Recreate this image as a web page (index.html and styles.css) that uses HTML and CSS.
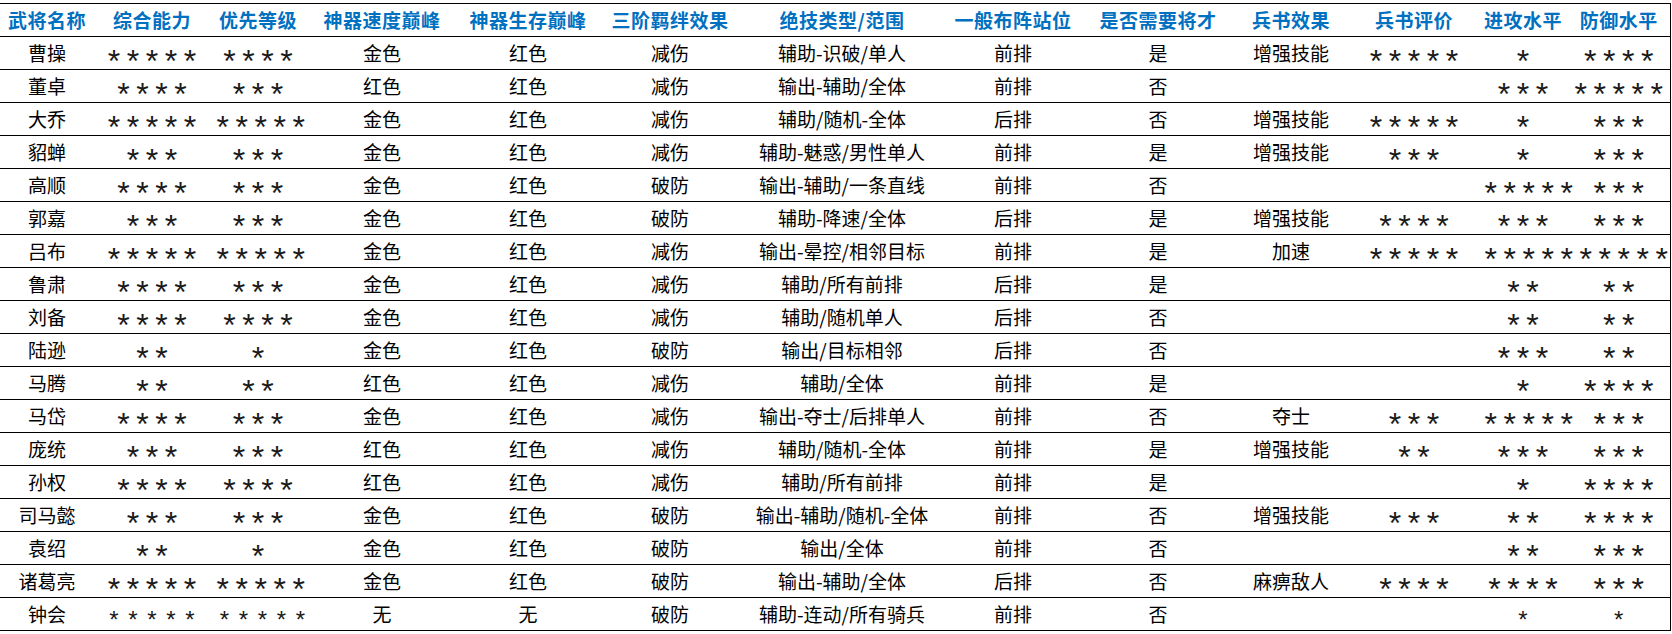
FILE: index.html
```html
<!DOCTYPE html>
<html lang="zh-CN">
<head>
<meta charset="utf-8">
<title>武将评价表</title>
<link rel="stylesheet" href="styles.css">
</head>
<body>
<div class="sheet">
<table class="grid">
<colgroup>
<col class="w1"><col class="w2"><col class="w3"><col class="w4"><col class="w5"><col class="w6"><col class="w7"><col class="w8"><col class="w9"><col class="w10"><col class="w11"><col class="w12"><col class="w13">
</colgroup>
<thead>
<tr><th>武将名称</th><th>综合能力</th><th>优先等级</th><th>神器速度巅峰</th><th>神器生存巅峰</th><th>三阶羁绊效果</th><th>绝技类型/范围</th><th>一般布阵站位</th><th>是否需要将才</th><th>兵书效果</th><th>兵书评价</th><th>进攻水平</th><th>防御水平</th></tr>
</thead>
<tbody>
<tr><td>曹操</td><td class="st">*****</td><td class="st">****</td><td>金色</td><td>红色</td><td>减伤</td><td>辅助-识破/单人</td><td>前排</td><td>是</td><td>增强技能</td><td class="st">*****</td><td class="st">*</td><td class="st">****</td></tr>
<tr><td>董卓</td><td class="st">****</td><td class="st">***</td><td>红色</td><td>红色</td><td>减伤</td><td>输出-辅助/全体</td><td>前排</td><td>否</td><td></td><td></td><td class="st">***</td><td class="st">*****</td></tr>
<tr><td>大乔</td><td class="st">*****</td><td class="st">*****</td><td>金色</td><td>红色</td><td>减伤</td><td>辅助/随机-全体</td><td>后排</td><td>否</td><td>增强技能</td><td class="st">*****</td><td class="st">*</td><td class="st">***</td></tr>
<tr><td>貂蝉</td><td class="st">***</td><td class="st">***</td><td>金色</td><td>红色</td><td>减伤</td><td>辅助-魅惑/男性单人</td><td>前排</td><td>是</td><td>增强技能</td><td class="st">***</td><td class="st">*</td><td class="st">***</td></tr>
<tr><td>高顺</td><td class="st">****</td><td class="st">***</td><td>金色</td><td>红色</td><td>破防</td><td>输出-辅助/一条直线</td><td>前排</td><td>否</td><td></td><td></td><td class="st">*****</td><td class="st">***</td></tr>
<tr><td>郭嘉</td><td class="st">***</td><td class="st">***</td><td>金色</td><td>红色</td><td>破防</td><td>辅助-降速/全体</td><td>后排</td><td>是</td><td>增强技能</td><td class="st">****</td><td class="st">***</td><td class="st">***</td></tr>
<tr><td>吕布</td><td class="st">*****</td><td class="st">*****</td><td>金色</td><td>红色</td><td>减伤</td><td>输出-晕控/相邻目标</td><td>前排</td><td>是</td><td>加速</td><td class="st">*****</td><td class="st" colspan="2">**********</td></tr>
<tr><td>鲁肃</td><td class="st">****</td><td class="st">***</td><td>金色</td><td>红色</td><td>减伤</td><td>辅助/所有前排</td><td>后排</td><td>是</td><td></td><td></td><td class="st">**</td><td class="st">**</td></tr>
<tr><td>刘备</td><td class="st">****</td><td class="st">****</td><td>金色</td><td>红色</td><td>减伤</td><td>辅助/随机单人</td><td>后排</td><td>否</td><td></td><td></td><td class="st">**</td><td class="st">**</td></tr>
<tr><td>陆逊</td><td class="st">**</td><td class="st">*</td><td>金色</td><td>红色</td><td>破防</td><td>输出/目标相邻</td><td>后排</td><td>否</td><td></td><td></td><td class="st">***</td><td class="st">**</td></tr>
<tr><td>马腾</td><td class="st">**</td><td class="st">**</td><td>红色</td><td>红色</td><td>减伤</td><td>辅助/全体</td><td>前排</td><td>是</td><td></td><td></td><td class="st">*</td><td class="st">****</td></tr>
<tr><td>马岱</td><td class="st">****</td><td class="st">***</td><td>金色</td><td>红色</td><td>减伤</td><td>输出-夺士/后排单人</td><td>前排</td><td>否</td><td>夺士</td><td class="st">***</td><td class="st">*****</td><td class="st">***</td></tr>
<tr><td>庞统</td><td class="st">***</td><td class="st">***</td><td>红色</td><td>红色</td><td>减伤</td><td>辅助/随机-全体</td><td>前排</td><td>是</td><td>增强技能</td><td class="st">**</td><td class="st">***</td><td class="st">***</td></tr>
<tr><td>孙权</td><td class="st">****</td><td class="st">****</td><td>红色</td><td>红色</td><td>减伤</td><td>辅助/所有前排</td><td>前排</td><td>是</td><td></td><td></td><td class="st">*</td><td class="st">****</td></tr>
<tr><td>司马懿</td><td class="st">***</td><td class="st">***</td><td>金色</td><td>红色</td><td>破防</td><td>输出-辅助/随机-全体</td><td>前排</td><td>否</td><td>增强技能</td><td class="st">***</td><td class="st">**</td><td class="st">****</td></tr>
<tr><td>袁绍</td><td class="st">**</td><td class="st">*</td><td>金色</td><td>红色</td><td>破防</td><td>输出/全体</td><td>前排</td><td>否</td><td></td><td></td><td class="st">**</td><td class="st">***</td></tr>
<tr><td>诸葛亮</td><td class="st">*****</td><td class="st">*****</td><td>金色</td><td>红色</td><td>破防</td><td>输出-辅助/全体</td><td>后排</td><td>否</td><td>麻痹敌人</td><td class="st">****</td><td class="st">****</td><td class="st">***</td></tr>
<tr class="end"><td>钟会</td><td class="st">*****</td><td class="st">*****</td><td>无</td><td>无</td><td>破防</td><td>辅助-连动/所有骑兵</td><td>前排</td><td>否</td><td></td><td></td><td class="st">*</td><td class="st">*</td></tr>
</tbody>
</table>
</div>
</body>
</html>
```
FILE: styles.css
```css
html, body {
  margin: 0;
  padding: 0;
  background: #ffffff;
}
.sheet {
  padding-top: 3px;
  width: 1670px;
}
.grid {
  border-collapse: collapse;
  table-layout: fixed;
  width: 1670px;
  font-family: "Noto Sans CJK SC", "Noto Sans", sans-serif;
  font-size: 19px;
  color: #000000;
  border-right: 1px solid #000000;
}
.w1 { width: 94px; }
.w2 { width: 116px; }
.w3 { width: 96px; }
.w4 { width: 152px; }
.w5 { width: 140px; }
.w6 { width: 144px; }
.w7 { width: 200px; }
.w8 { width: 142px; }
.w9 { width: 148px; }
.w10 { width: 118px; }
.w11 { width: 128px; }
.w12 { width: 90px; }
.w13 { width: 102px; }
.grid th, .grid td {
  height: 32px;
  padding: 0;
  text-align: center;
  vertical-align: middle;
  white-space: nowrap;
  line-height: 32px;
  border-top: 1px solid #000000;
  border-bottom: 1px solid #000000;
}
.grid th {
  font-weight: bold;
  color: #0070c0;
  letter-spacing: 0.5px;
}
.grid td {
  font-weight: normal;
}
.grid td.st {
  font-family: "Liberation Sans", Arial, sans-serif;
  font-size: 32px;
  color: #1a1a1a;
  letter-spacing: 6.55px;
  height: 16px;
  line-height: 16px;
  padding: 16px 0 0 6.55px;
  overflow: visible;
}
.grid tr.end td.st {
  font-size: 24px;
  letter-spacing: 9.66px;
  height: 20px;
  line-height: 20px;
  padding: 12px 0 0 9.66px;
}
```
